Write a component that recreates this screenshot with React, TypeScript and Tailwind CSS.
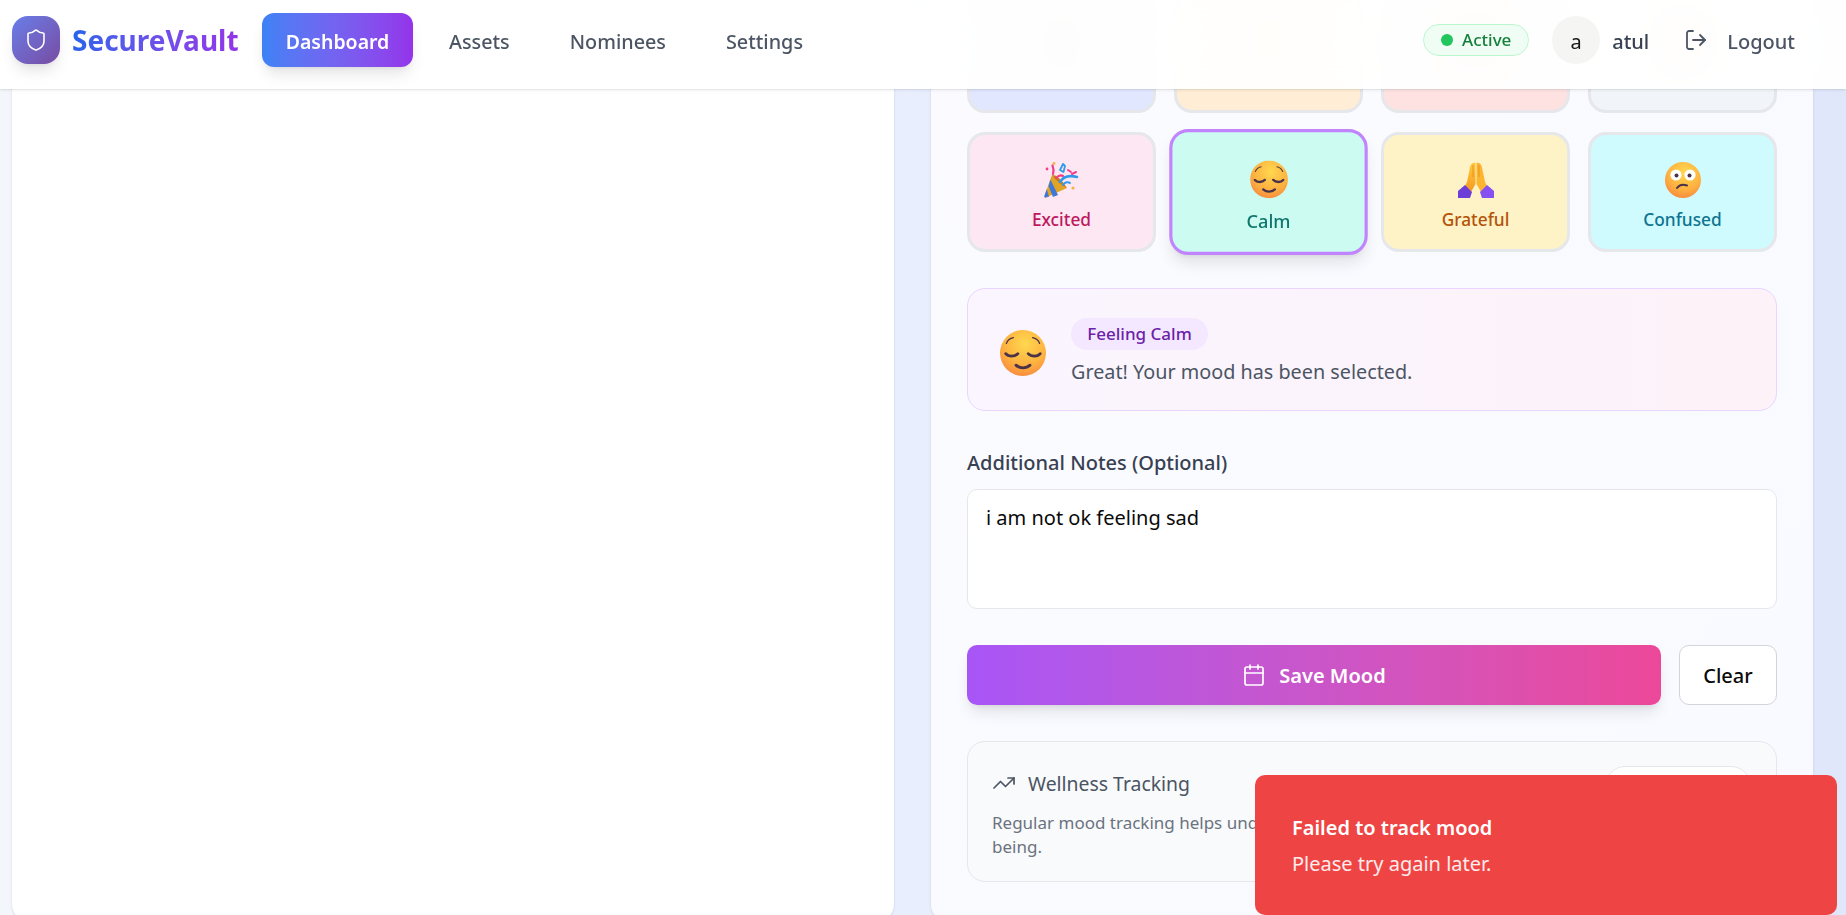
import React from 'react';
import { Shield, LogOut, Calendar, TrendingUp } from 'lucide-react';

function FaceBase({ id, children, size = 36 }: { id: string; children: React.ReactNode; size?: number }) {
  return (
    <svg width={size} height={size} viewBox="0 0 36 36" aria-hidden="true">
      <defs>
        <radialGradient id={id} cx="0.55" cy="0.3" r="0.85">
          <stop offset="0" stopColor="#ffd84f" />
          <stop offset="0.55" stopColor="#fdb140" />
          <stop offset="0.88" stopColor="#f8873f" />
          <stop offset="1" stopColor="#ee6f86" />
        </radialGradient>
      </defs>
      <circle cx="18" cy="18" r="18" fill={`url(#${id})`} />
      {children}
    </svg>
  );
}

function RelievedFace({ id, size }: { id: string; size?: number }) {
  const c = '#4a3348';
  return (
    <FaceBase id={id} size={size}>
      <g fill="none" stroke={c} strokeLinecap="round">
        <path d="M5 10.5c1-2.5 3-4 5.5-4.5" strokeWidth="1" />
        <path d="M31 10.5c-1-2.5-3-4-5.5-4.5" strokeWidth="1" />
        <path d="M4.500 18.500c2 2.600 7 2.600 9.500 0" strokeWidth="2.200" />
        <path d="M22 18.500c2.500 2.600 7.500 2.600 9.500 0" strokeWidth="2.200" />
        <path d="M12.500 27.500c3 2.800 8 2.800 11 0" strokeWidth="2.200" />
      </g>
    </FaceBase>
  );
}

function ConfusedFace() {
  return (
    <FaceBase id="confused-face">
      <circle cx="11" cy="13" r="5.6" fill="#fff" />
      <circle cx="25" cy="13" r="5.6" fill="#fff" />
      <circle cx="11.5" cy="13.5" r="2" fill="#4a3348" />
      <circle cx="24.5" cy="13.5" r="2" fill="#4a3348" />
      <path d="M12 26c2-3 6-4 10-2.5" fill="none" stroke="#4a3348" strokeWidth="2" strokeLinecap="round" />
    </FaceBase>
  );
}

function PartyPopper() {
  return (
    <svg width="36" height="36" viewBox="0 0 36 36" aria-hidden="true">
      <path d="M8 13 L23 26 L2 35.5 Q0 36 0.6 33.5 Z" fill="#e0a526" />
      <path d="M6.4 17.6 L14 33 L9 35 L4.5 24 Z" fill="#3f78d8" />
      <path d="M2.8 27 L5 34.8 L1.5 35.6 Q0 36 0.5 33.5 Z" fill="#3f78d8" />
      <path d="M8 13 Q14 12 23 26 Q16 23 8 13Z" fill="#c9791f" />
      <path d="M12 16c2-2 5-3.5 7-2" fill="none" stroke="#f0447e" strokeWidth="2.2" strokeLinecap="round" />
      <path d="M9 12c1-3 .5-6-.5-8.500" fill="none" stroke="#f23d8e" strokeWidth="2.2" strokeLinecap="round" />
      <path d="M16 20c3-5 9-7 17-5" fill="none" stroke="#2f9be8" strokeWidth="2.6" strokeLinecap="round" />
      <path d="M19 23c2-3 5-3.500 7-2" fill="none" stroke="#2f9be8" strokeWidth="2" strokeLinecap="round" />
      <path d="M19 2l-3 6 3.500 2 1.500-6z" fill="none" stroke="#2f9be8" strokeWidth="1.800" strokeLinejoin="round" />
      <path d="M24 8l3 2M28 12l4-2" stroke="#f23d8e" strokeWidth="2" strokeLinecap="round" />
      <circle cx="3" cy="7" r="1.400" fill="#f23d8e" />
      <circle cx="10" cy="1.500" r="1.400" fill="#f2b33d" />
      <circle cx="29" cy="26" r="1.500" fill="#f2b33d" />
    </svg>
  );
}

function FoldedHands() {
  return (
    <svg width="36" height="36" viewBox="0 0 36 36" aria-hidden="true">
      <defs>
        <linearGradient id="hands-skin" x1="0" y1="0" x2="0" y2="1">
          <stop offset="0" stopColor="#ffc83d" />
          <stop offset="1" stopColor="#f59a1f" />
        </linearGradient>
      </defs>
      <path d="M17.500 1 C14 0 12 3 11.500 8 L9 20 L7 24 L13 30 L17.500 22 Z" fill="url(#hands-skin)" />
      <path d="M18.500 1 C22 0 24 3 24.500 8 L27 20 L29 24 L23 30 L18.500 22 Z" fill="#fdb52f" />
      <path d="M15 3v12M21 3v12" stroke="#e98b1a" strokeWidth="0.800" />
      <path d="M7 23 L14 30 L12 36 L0 36 L0 29 Z" fill="#6d3fd8" />
      <path d="M29 23 L22 30 L24 36 L36 36 L36 29 Z" fill="#8750f0" />
    </svg>
  );
}

const bottomMoods = [
  { label: 'Excited', bg: 'bg-[#fce7f3]', text: 'text-[#be185d]', icon: <PartyPopper /> },
  { label: 'Calm', bg: 'bg-[#ccfbf1]', text: 'text-[#0f766e]', icon: <RelievedFace id="calm-face" />, selected: true },
  { label: 'Grateful', bg: 'bg-[#fef3c7]', text: 'text-[#b45309]', icon: <FoldedHands /> },
  { label: 'Confused', bg: 'bg-[#cffafe]', text: 'text-[#0e7490]', icon: <ConfusedFace /> },
];

const topRow = ['bg-[#e0e7ff]', 'bg-[#ffedd5]', 'bg-[#fee2e2]', 'bg-[#f1f5f9]'];

function MoodCard({ label, bg, text, children, selected }: { label: string; bg: string; text: string; children: React.ReactNode; selected?: boolean }) {
  return (
    <div
      className={
        selected
          ? `flex h-[120px] flex-col items-center rounded-[18px] border-[3px] border-[#c084fc] pt-[27px] scale-105 shadow-lg ${bg}`
          : `flex h-[120px] flex-col items-center rounded-[18px] border-[3px] border-[#e5e7eb] pt-[27px] ${bg}`
      }
    >
      <div className="flex h-[36px] items-center justify-center">{children}</div>
      <span className={`mt-[10px] text-[17.3px] leading-[24px] font-medium ${text}`}>{label}</span>
    </div>
  );
}

// first row sits under the header, only its blurred emoji shows through
function HiddenMoodCard({ bg, id }: { bg: string; id: string }) {
  return (
    <div className={`flex h-[120px] justify-center rounded-[18px] border-[3px] border-[#e5e7eb] pt-[27px] ${bg}`}>
      <div className="h-[36px] blur-[12px]">
        <RelievedFace id={id} />
      </div>
    </div>
  );
}

function Header() {
  return (
    <header className="absolute top-0 left-0 z-10 flex h-[89px] w-full items-center justify-between bg-white/95 pr-[51px] pb-[9px] pl-[12px] shadow-sm backdrop-blur-xl">
      <div className="flex items-center">
        <div className="flex h-[48px] w-[48px] items-center justify-center rounded-2xl bg-gradient-to-br from-[#667eea] to-[#764ba2] shadow-lg">
          <Shield className="h-6 w-6 text-white" strokeWidth={1.6} />
        </div>
        <span className="ml-3 w-[166px] bg-gradient-to-r from-[#2563eb] to-[#9333ea] bg-clip-text text-[28px] leading-[36px] font-bold text-transparent">SecureVault</span>
        <nav className="ml-6 flex items-center gap-3 text-[19.8px] font-medium text-[#4b5563]">
          <span className="flex h-[54px] w-[151px] items-center justify-center rounded-xl bg-gradient-to-r from-[#3b82f6] to-[#9333ea] pt-[3px] text-[19.5px] font-semibold text-white shadow-lg">Dashboard</span>
          <span className="px-6 pt-[3px]">Assets</span>
          <span className="px-6 pt-[3px]">Nominees</span>
          <span className="px-6 pt-[3px]">Settings</span>
        </nav>
      </div>
      <div className="flex items-center">
        <div className="flex h-[32px] w-[106px] items-center justify-center gap-[9px] rounded-full border border-[#bbf7d0] bg-[#f0fdf4] text-[17px] font-medium text-[#15803d]">
          <span className="h-[12px] w-[12px] rounded-full bg-[#22c55e]" />
          Active
        </div>
        <div className="ml-[23px] flex h-[48px] w-[48px] items-center justify-center rounded-full bg-[#f5f5f4] pt-[3px] text-[20px] text-[#171717]">a</div>
        <span className="ml-3 pt-[3px] text-[20px] font-medium text-[#374151]">atul</span>
        <div className="ml-[35px] flex items-center gap-[19px] text-[20px] font-medium text-[#4b5563]">
          <LogOut className="h-6 w-6" strokeWidth={1.8} />
          <span className="pt-[3px]">Logout</span>
        </div>
      </div>
    </header>
  );
}

function MoodPanel() {
  return (
    <section className="rounded-[18px] bg-gradient-to-br from-[#fbfbff] to-[#f8faff] px-[36px] pt-[33px] pb-[40px] shadow-sm">
      <div className="grid grid-cols-4 gap-[18px] gap-y-[19px]">
        {topRow.map((bg, i) => (
          <HiddenMoodCard key={bg} bg={bg} id={`top-face-${i}`} />
        ))}
        {bottomMoods.map((m) => (
          <MoodCard key={m.label} label={m.label} bg={m.bg} text={m.text} selected={m.selected}>
            {m.icon}
          </MoodCard>
        ))}
      </div>

      <div className="mt-[36px] flex h-[123px] items-center rounded-[18px] border border-[#e9d5ff] bg-gradient-to-r from-[#faf5ff] to-[#fdf2f8] pt-[6px] pl-[32px]">
        <RelievedFace id="feeling-face" size={46} />
        <div className="ml-[25px]">
          <span className="-mt-[1px] flex h-[32px] w-[137px] items-center justify-center rounded-full bg-[#f3e8ff] text-[17px] font-medium text-[#6b21a8]">Feeling Calm</span>
          <p className="mt-[8px] text-[19.8px] leading-[28px] text-[#4b5563]">Great! Your mood has been selected.</p>
        </div>
      </div>

      <label className="mt-[36px] block pt-[1px] text-[20px] leading-[30px] font-medium text-[#374151]">Additional Notes (Optional)</label>
      <div className="mt-[11px] h-[120px] rounded-[10px] border border-[#e5e7eb] bg-white px-[18px] py-[14px] text-[20px] leading-[28px] text-[#0a0a0a]">i am not ok feeling sad</div>

      <div className="mt-[36px] flex gap-[18px]">
        <button className="flex h-[60px] flex-1 items-center justify-center gap-[13px] rounded-[10px] bg-gradient-to-r from-[#a855f7] to-[#ec4899] text-[20px] font-semibold text-white shadow-lg">
          <Calendar className="h-6 w-6" strokeWidth={1.7} />
          <span className="pt-[2px]">Save Mood</span>
        </button>
        <button className="h-[60px] w-[98px] rounded-[10px] border border-[#d1d5db] bg-white pt-[2px] text-[20px] font-medium text-[#0a0a0a]">Clear</button>
      </div>

      <div className="relative mt-[36px] h-[141px] rounded-[18px] border border-[#e5e7eb] bg-[#f9fafb] px-[24px] pt-[24px]">
        <div className="flex items-center gap-[12px] text-[#4b5563]">
          <TrendingUp className="h-6 w-6" strokeWidth={1.7} />
          <span className="pt-[2px] text-[19.4px] leading-[32px]">Wellness Tracking</span>
        </div>
        <span className="absolute top-[24px] right-[25px] h-[40px] w-[146px] rounded-full border border-[#e5e7eb] bg-white" />
        <p className="-mr-[20px] mt-[11px] text-[17px] leading-[24px] text-[#6b7280]">Regular mood tracking helps understand your emotional patterns and improve your overall well-being.</p>
      </div>
    </section>
  );
}

export default function App() {
  return (
    <div className="relative h-[915px] overflow-hidden bg-gradient-to-r from-[#f3f6fb] via-[#e9eefe] to-[#e0e7fb]" style={{ fontFamily: '"Noto Sans", sans-serif' }}>
      <Header />
      <main className="-mt-[40px] grid grid-cols-[882px_882px] gap-[37px] pl-[12px]">
        <section className="rounded-[18px] bg-white shadow-sm" />
        <MoodPanel />
      </main>
      <div className="absolute right-[9px] bottom-0 z-20 flex h-[140px] w-[582px] flex-col justify-center rounded-[10px] bg-[#ef4444] pt-[2px] pl-[37px] text-[20px] text-white">
        <p className="leading-[28px] font-semibold">Failed to track mood</p>
        <p className="mt-[8px] leading-[28px] text-white/90">Please try again later.</p>
      </div>
    </div>
  );
}
